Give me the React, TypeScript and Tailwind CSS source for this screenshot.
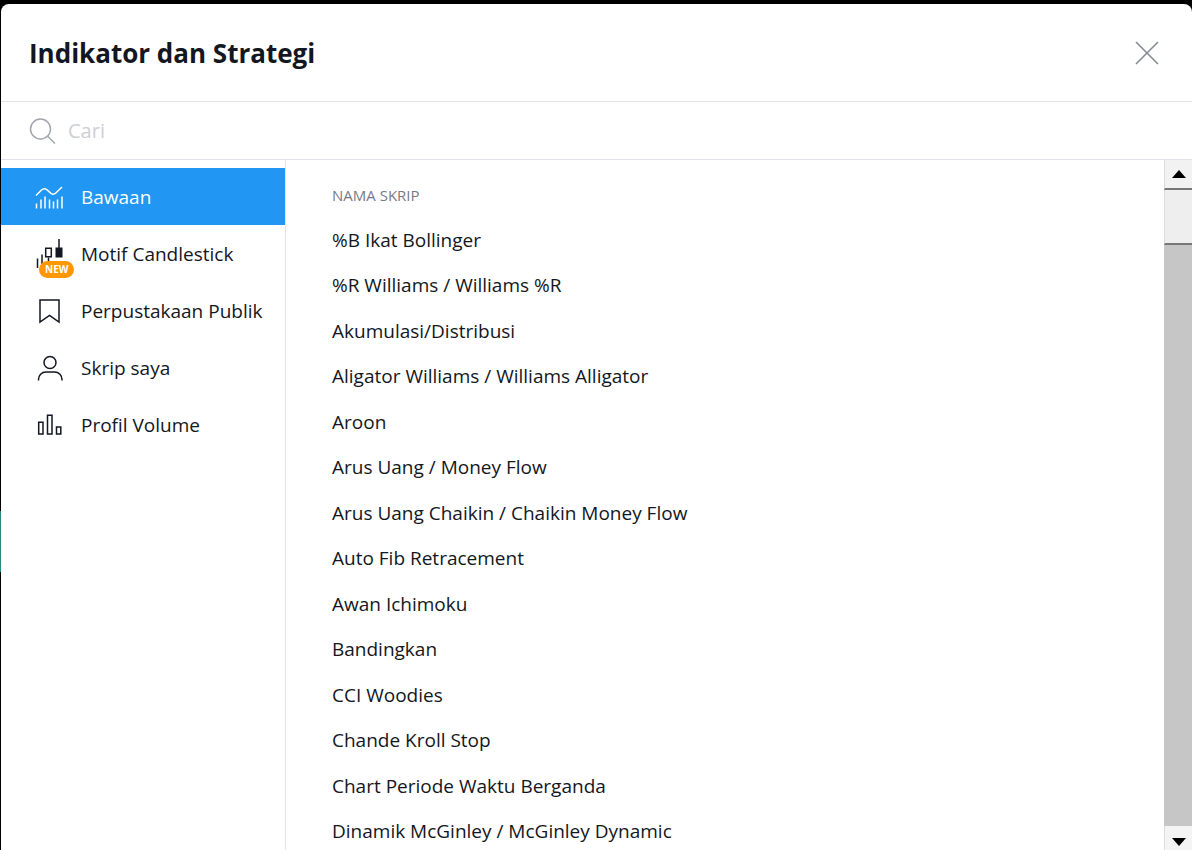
import React, { FC, ReactNode } from "react";

interface Category {
  label: string;
  icon: ReactNode;
  isNew?: boolean;
}

const scripts = [
  "%B Ikat Bollinger",
  "%R Williams / Williams %R",
  "Akumulasi/Distribusi",
  "Aligator Williams / Williams Alligator",
  "Aroon",
  "Arus Uang / Money Flow",
  "Arus Uang Chaikin / Chaikin Money Flow",
  "Auto Fib Retracement",
  "Awan Ichimoku",
  "Bandingkan",
  "CCI Woodies",
  "Chande Kroll Stop",
  "Chart Periode Waktu Berganda",
  "Dinamik McGinley / McGinley Dynamic",
];

const iconProps = {
  width: 32,
  height: 32,
  viewBox: "0 0 32 32",
  fill: "none",
  stroke: "currentColor",
  strokeWidth: 1.5,
  "aria-hidden": true,
};

const BuiltInIcon = () => (
  <svg {...iconProps}>
    <path d="M3 14.500l5.500-5.500c1.800-1.700 3.500-1.700 5.300-.3l4.200 3.600c1.700 1.300 3.200 1.200 4.800-.3L29 6" />
    <path d="M3.500 22.500v5M8 18.500v9M12 15.500v12M16.500 18.500v9M20.500 20.500v7M24.500 18.500v9M29 15.500v12" />
  </svg>
);

const CandlesIcon = () => (
  <svg {...iconProps}>
    <path d="M4.500 20.500v9.500M9 16.500v9.500M15.500 19.500v6" />
    <path d="M12.700 10.200h5.600v8.600h-5.600z" />
    <path d="M26 1v9" />
    <path d="M22.500 9.500H29.500v10h-7z" fill="currentColor" stroke="none" />
  </svg>
);

const BookmarkIcon = () => (
  <svg {...iconProps}>
    <path d="M7 5h19v22l-9.500-6.500L7 27z" />
  </svg>
);

const PersonIcon = () => (
  <svg {...iconProps}>
    <circle cx="17" cy="10.500" r="6" />
    <path d="M5.500 28.500v-1c0-4 3-7.500 7.500-7.500h8.500c4.500 0 7.500 3.500 7.500 7.500v1" />
  </svg>
);

const VolumeIcon = () => (
  <svg {...iconProps}>
    <path d="M5.700 13.200h4.300v11.800h-4.300zM14.500 6.200h4.500v18.800h-4.500zM23.500 18h4.300v7h-4.300z" />
  </svg>
);

const categories: Category[] = [
  { label: "Bawaan", icon: <BuiltInIcon /> },
  { label: "Motif Candlestick", icon: <CandlesIcon />, isNew: true },
  { label: "Perpustakaan Publik", icon: <BookmarkIcon /> },
  { label: "Skrip saya", icon: <PersonIcon /> },
  { label: "Profil Volume", icon: <VolumeIcon /> },
];

const Sidebar: FC = () => (
  <nav className="w-[285px] shrink-0 border-r border-[#e0e3eb] pt-2">
    {categories.map(({ label, icon, isNew }, i) => (
      <button
        key={label}
        type="button"
        className={
          i === 0
            ? "flex h-[57px] w-full items-center gap-4 bg-[#2196f3] pl-8 text-left text-white"
            : "flex h-[57px] w-full items-center gap-4 pl-8 text-left"
        }
      >
        <span className="relative">
          {icon}
          {isNew && (
            <span className="absolute -bottom-2 left-1.5 rounded-full bg-[#ff9800] px-1.5 text-[10px] leading-[17px] font-bold text-white">
              NEW
            </span>
          )}
        </span>
        {label}
      </button>
    ))}
  </nav>
);

const ScrollTrack: FC = () => (
  <div className="flex w-7 shrink-0 flex-col bg-[#c6c6c6]">
    <button
      type="button"
      aria-label="Gulir ke atas"
      className="flex h-[30px] items-center justify-center border-b-2 border-l border-b-[#777777] border-l-[#dddddd] bg-[#f2f2f2]"
    >
      <svg width="14" height="8" viewBox="0 0 14 8" aria-hidden="true">
        <path d="M7 0l7 8H0z" />
      </svg>
    </button>
    <div className="h-[55px] border-b-2 border-l border-b-[#777777] border-l-[#dddddd] bg-[#eeeeee]" />
    <button
      type="button"
      aria-label="Gulir ke bawah"
      className="mt-auto flex h-6 items-end justify-center border-l border-[#dddddd] bg-[#f4f4f4] pb-1"
    >
      <svg width="14" height="8" viewBox="0 0 14 8" aria-hidden="true">
        <path d="M7 8l7-8H0z" />
      </svg>
    </button>
  </div>
);

const App: FC = () => {
  return (
    <div className="relative h-screen bg-black pt-1 pl-px font-['Trebuchet_MS','Open_Sans',sans-serif] text-[19px] leading-6 text-[#131722]">
      <div className="absolute top-[511px] left-0 h-[61px] w-px bg-[#26897f]"></div>
      <div className="relative flex h-full flex-col overflow-hidden rounded-t-lg bg-white">
        <header className="flex h-[98px] shrink-0 items-center justify-between border-b border-[#e0e3eb] pr-[33px] pl-7">
          <h1 className="text-[26px] leading-8 font-bold">Indikator dan Strategi</h1>
          <button type="button" aria-label="Tutup" className="text-[#868993]">
            <svg width="24" height="24" viewBox="0 0 24 24" fill="none" stroke="currentColor" strokeWidth="1.6">
              <path d="M1 1l22 22M23 1L1 23" />
            </svg>
          </button>
        </header>
        <label className="flex h-[58px] shrink-0 items-center gap-3 border-b border-[#e0e3eb] pl-7">
          <svg width="27" height="26" viewBox="0 0 27 26" fill="none" stroke="#a3a6af" strokeWidth="1.5" aria-hidden="true">
            <circle cx="11.500" cy="11" r="10" />
            <path d="M18.500 18l7.500 7.500" />
          </svg>
          <input
            type="text"
            aria-label="Cari"
            placeholder="Cari"
            className="min-w-0 flex-1 text-[20px] outline-none placeholder:text-[#cdcfd6]"
          />
        </label>

        <div className="flex min-h-0 flex-1">
          <Sidebar />
          <main className="min-w-0 flex-1 overflow-hidden pt-6 pl-[46px]">
            <h2 className="h-[33px] text-[15px] leading-[22px] text-[#787b86]">NAMA SKRIP</h2>
            <ul>
              {scripts.map((name) => (
                <li key={name} className="odd:h-[45px] even:h-[46px]">
                  <button type="button" className="flex h-full w-full items-center text-left">
                    {name}
                  </button>
                </li>
              ))}
            </ul>
          </main>
          <ScrollTrack />
        </div>
      </div>
    </div>
  );
};

export default App;
